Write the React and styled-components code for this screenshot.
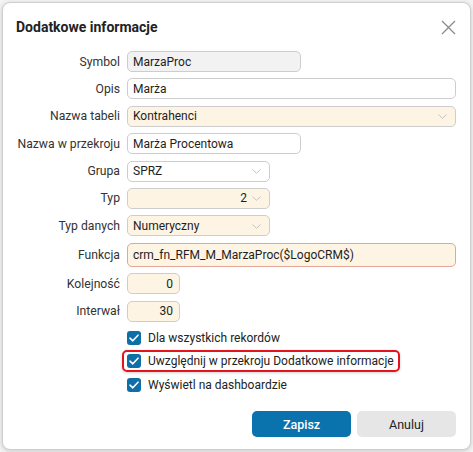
import React from "react";
import styled, { createGlobalStyle } from "styled-components";

const Global = createGlobalStyle`
  html, body { margin: 0; padding: 0; background: #f3f3f3; }
  body { font-family: Roboto, "Liberation Sans", Arial, sans-serif; }
  * { box-sizing: border-box; }
`;

const Page = styled.div`
  width: 473px;
  height: 452px;
  padding: 2px;
`;

const Dialog = styled.div`
  width: 469px;
  height: 448px;
  background: #fff;
  border: 1px solid #cfcfcf;
  border-radius: 8px;
  box-shadow: 0 1px 4px rgba(0, 0, 0, 0.18);
  display: flex;
  flex-direction: column;
  padding: 14px 14px 12px 13px;
`;

const Header = styled.div`
  display: flex;
  align-items: center;
  justify-content: space-between;
  height: 20px;
  margin-bottom: 14px;
`;

const Title = styled.h1`
  margin: 0;
  font-size: 14px;
  font-weight: 700;
  color: #222;
`;

const Close = styled.button`
  border: 0;
  background: none;
  padding: 0;
  width: 16px;
  height: 16px;
  display: flex;
  align-items: center;
  justify-content: center;
  cursor: pointer;
`;

const Form = styled.div`
  display: grid;
  grid-template-columns: 104px 1fr;
  column-gap: 7px;
  row-gap: 6.4px;
  align-items: center;
`;

const Label = styled.label`
  font-size: 12.2px;
  color: #333;
  text-align: right;
  white-space: nowrap;
`;

const Field = styled.div`
  position: relative;
  display: flex;
  align-items: center;
  height: ${(p) => p.$h || 21}px;
  width: ${(p) => (p.$w ? `${p.$w}px` : "100%")};
  border: 1px solid ${(p) => (p.$error ? "#e3a595" : "#cdcdcd")};
  border-radius: 5px;
  background: ${(p) => (p.$bg === "cream" ? "#fdf4e4" : p.$bg === "gray" ? "#f2f2f2" : "#fff")};
  padding: 0 ${(p) => (p.$select ? 22 : 6)}px 0 5px;
  font-size: 12px;
  color: #1e1e1e;
  justify-content: ${(p) => (p.$right ? "flex-end" : "flex-start")};
  white-space: nowrap;
`;

const Chevron = styled.svg`
  position: absolute;
  right: 8px;
  top: 50%;
  margin-top: -2px;
`;

const Checks = styled.div`
  display: flex;
  flex-direction: column;
  gap: 1.5px;
  margin-top: 5px;
  padding-left: 111px;
`;

const CheckRow = styled.div`
  display: inline-flex;
  align-self: flex-start;
  align-items: center;
  gap: 7px;
  height: 22px;
  font-size: 12px;
  color: #222;
  ${(p) =>
    p.$highlight &&
    `
    border: 2px solid #e3141c;
    border-radius: 5px;
    margin-left: -5px;
    padding: 0 4px 0 3px;
    box-shadow: 0 1px 3px rgba(0,0,0,0.18);
  `}
`;

const Box = styled.span`
  width: 14px;
  height: 14px;
  border-radius: 3px;
  background: #0d6ea8;
  display: flex;
  align-items: center;
  justify-content: center;
`;

const Footer = styled.div`
  margin-top: auto;
  display: flex;
  justify-content: flex-end;
  gap: 6px;
`;

const Button = styled.button`
  width: 99px;
  height: 26px;
  border-radius: 5px;
  border: 0;
  font-family: Roboto, "Liberation Sans", Arial, sans-serif;
  font-size: 12.5px;
  font-weight: ${(p) => (p.$primary ? 500 : 400)};
  background: ${(p) => (p.$primary ? "#0a72ad" : "#e6e6e6")};
  color: ${(p) => (p.$primary ? "#fff" : "#222")};
  cursor: pointer;
`;

const ChevronIcon = () => (
  <Chevron width="9" height="5" viewBox="0 0 9 5">
    <path d="M0.5 0.5 L4.5 4.3 L8.5 0.5" fill="none" stroke="#c4c4c4" strokeWidth="1" />
  </Chevron>
);

const Check = () => (
  <Box>
    <svg width="10" height="8" viewBox="0 0 10 8">
      <path d="M1 4.2 L3.8 6.8 L9 1.2" fill="none" stroke="#fff" strokeWidth="1.6" strokeLinecap="round" strokeLinejoin="round" />
    </svg>
  </Box>
);

export default function App() {
  return (
    <>
      <Global />
      <Page>
        <Dialog>
          <Header>
            <Title>Dodatkowe informacje</Title>
            <Close aria-label="close">
              <svg width="15" height="15" viewBox="0 0 15 15">
                <path d="M1 1 L14 14 M14 1 L1 14" stroke="#8a8a8a" strokeWidth="1.3" />
              </svg>
            </Close>
          </Header>
          <Form>
            <Label>Symbol</Label>
            <Field $w={174} $bg="gray">MarzaProc</Field>
            <Label>Opis</Label>
            <Field>Marża</Field>
            <Label>Nazwa tabeli</Label>
            <Field $bg="cream" $select>Kontrahenci<ChevronIcon /></Field>
            <Label>Nazwa w przekroju</Label>
            <Field $w={174}>Marża Procentowa</Field>
            <Label>Grupa</Label>
            <Field $w={143} $select>SPRZ<ChevronIcon /></Field>
            <Label>Typ</Label>
            <Field $w={143} $bg="cream" $select $right>2<ChevronIcon /></Field>
            <Label>Typ danych</Label>
            <Field $w={143} $bg="cream" $select>Numeryczny<ChevronIcon /></Field>
            <Label>Funkcja</Label>
            <Field $h={24} $bg="cream" $error>crm_fn_RFM_M_MarzaProc($LogoCRM$)</Field>
            <Label>Kolejność</Label>
            <Field $w={53} $bg="cream" $right>0</Field>
            <Label>Interwał</Label>
            <Field $w={53} $bg="cream" $right>30</Field>
          </Form>
          <Checks>
            <CheckRow><Check />Dla wszystkich rekordów</CheckRow>
            <CheckRow $highlight><Check />Uwzględnij w przekroju Dodatkowe informacje</CheckRow>
            <CheckRow><Check />Wyświetl na dashboardzie</CheckRow>
          </Checks>
          <Footer>
            <Button $primary>Zapisz</Button>
            <Button>Anuluj</Button>
          </Footer>
        </Dialog>
      </Page>
    </>
  );
}
